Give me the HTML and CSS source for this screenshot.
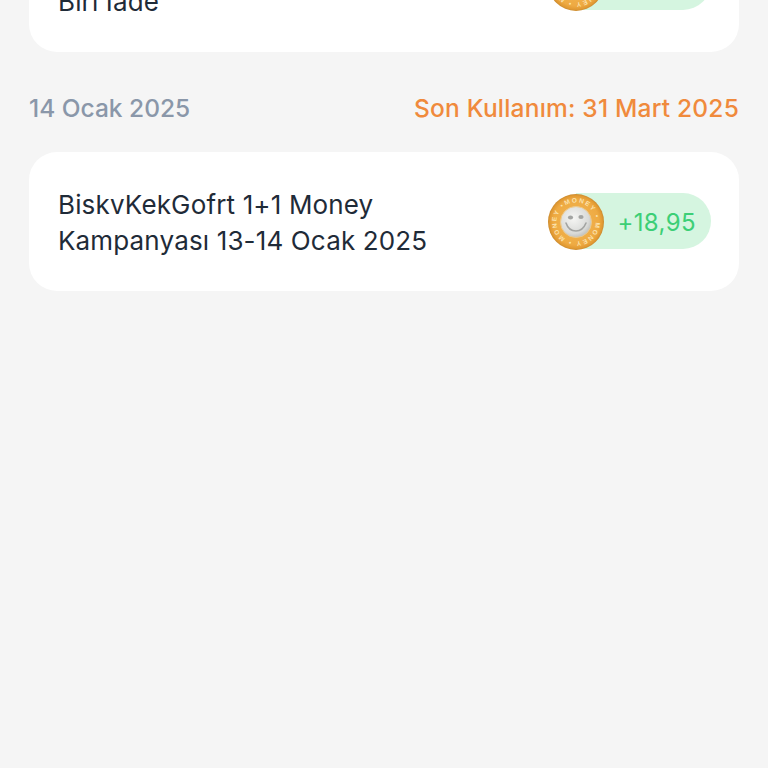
FILE: index.html
```html
<!DOCTYPE html>
<html lang="tr">
  <head>
    <meta charset="UTF-8" />
    <meta name="viewport" content="width=device-width, initial-scale=1.0" />
    <title>Money Hareketleri</title>
    <link rel="stylesheet" href="styles.css">
  </head>

  <body>
    <svg class="defs" width="0" height="0" aria-hidden="true">
      <defs>
        <radialGradient id="coinGold" cx="50%" cy="50%" r="50%">
          <stop offset="0%" stop-color="#f3b755" />
          <stop offset="82%" stop-color="#eeaa42" />
          <stop offset="94%" stop-color="#e29a33" />
          <stop offset="100%" stop-color="#c98a2e" />
        </radialGradient>
        <radialGradient id="coinFace" cx="42%" cy="38%" r="70%">
          <stop offset="0%" stop-color="#f6f6f4" />
          <stop offset="70%" stop-color="#d9dad8" />
          <stop offset="100%" stop-color="#b4b5b3" />
        </radialGradient>
        <path id="coinRing" d="M28 8.5a19.5 19.5 0 1 1-.01 0" />
        <symbol id="coin" viewBox="0 0 56 56">
          <circle cx="28" cy="28" r="28" fill="url(#coinGold)" />
          <text class="coin-text" transform="rotate(-32 28 28)"><textPath href="#coinRing" textLength="120">MONEY • MONEY • MONEY •</textPath></text>
          <circle cx="28" cy="28" r="15.5" fill="url(#coinFace)" stroke="#edc98a" stroke-width="1" />
          <ellipse cx="22.5" cy="23.5" rx="2.6" ry="2.1" fill="#a3a4a2" />
          <ellipse cx="33" cy="23" rx="2.6" ry="2.1" fill="#a3a4a2" />
          <path d="M18 29c2 6 6 8 10 8s8-3 10-8" fill="none" stroke="#a3a4a2" stroke-width="1.6" stroke-linecap="round" />
        </symbol>
      </defs>
    </svg>

    <section class="card card-first">
      <p class="card-title">&nbsp;<br />Biri Iade</p>
      <div class="earning">
        <svg class="coin"><use href="#coin" /></svg>
        <span class="amount">+18,95</span>
      </div>
    </section>

    <div class="date-row">
      <span class="date">14 Ocak 2025</span>
      <span class="expiry">Son Kullanım: 31 Mart 2025</span>
    </div>

    <section class="card">
      <p class="card-title">BiskvKekGofrt 1+1 Money<br />Kampanyası 13-14 Ocak 2025</p>
      <div class="earning">
        <svg class="coin"><use href="#coin" /></svg>
        <span class="amount">+18,95</span>
      </div>
    </section>
  </body>
</html>
```

FILE: styles.css
```css
html,
body {
  height: 100%;
  overflow: hidden;
}

body {
  margin: 0;
  padding: 0 29px;
  background-color: #f5f5f5;
  font-family: "Inter", "Noto Sans", sans-serif;
}

.defs {
  display: block;
  height: 0;
}

.card {
  display: flex;
  align-items: center;
  justify-content: space-between;
  height: 139px;
  padding: 0 28px 0 29px;
  box-sizing: border-box;
  background-color: #fff;
  border-radius: 28px;
}

.card-first {
  margin-top: -87px;
}

.card-title {
  margin: 2px 0 0;
  font-size: 26px;
  line-height: 36px;
  letter-spacing: 0.15px;
  color: #1f2b38;
}

.earning {
  display: flex;
  align-items: center;
  height: 56px;
}

.coin {
  position: relative;
  z-index: 1;
  display: block;
  width: 56px;
  height: 56px;
  flex: none;
}

.coin-text {
  font-family: "Liberation Sans", sans-serif;
  font-size: 6.5px;
  font-weight: 700;
  fill: #fbe2ad;
}

.amount {
  display: flex;
  align-items: center;
  box-sizing: border-box;
  height: 56px;
  margin: 0 0 2px -28px;
  padding: 3px 15px 0 41px;
  background-color: #d5f5e0;
  border-radius: 0 28px 28px 0;
  font-size: 24px;
  letter-spacing: 0.4px;
  color: #3ccf76;
}

.date-row {
  display: flex;
  align-items: center;
  justify-content: space-between;
  box-sizing: border-box;
  height: 100px;
  padding-top: 12px;
  font-size: 24.5px;
  font-weight: 500;
}

.date {
  color: #8a97a9;
}

.expiry {
  letter-spacing: 0.2px;
  color: #f08a3c;
}
```
